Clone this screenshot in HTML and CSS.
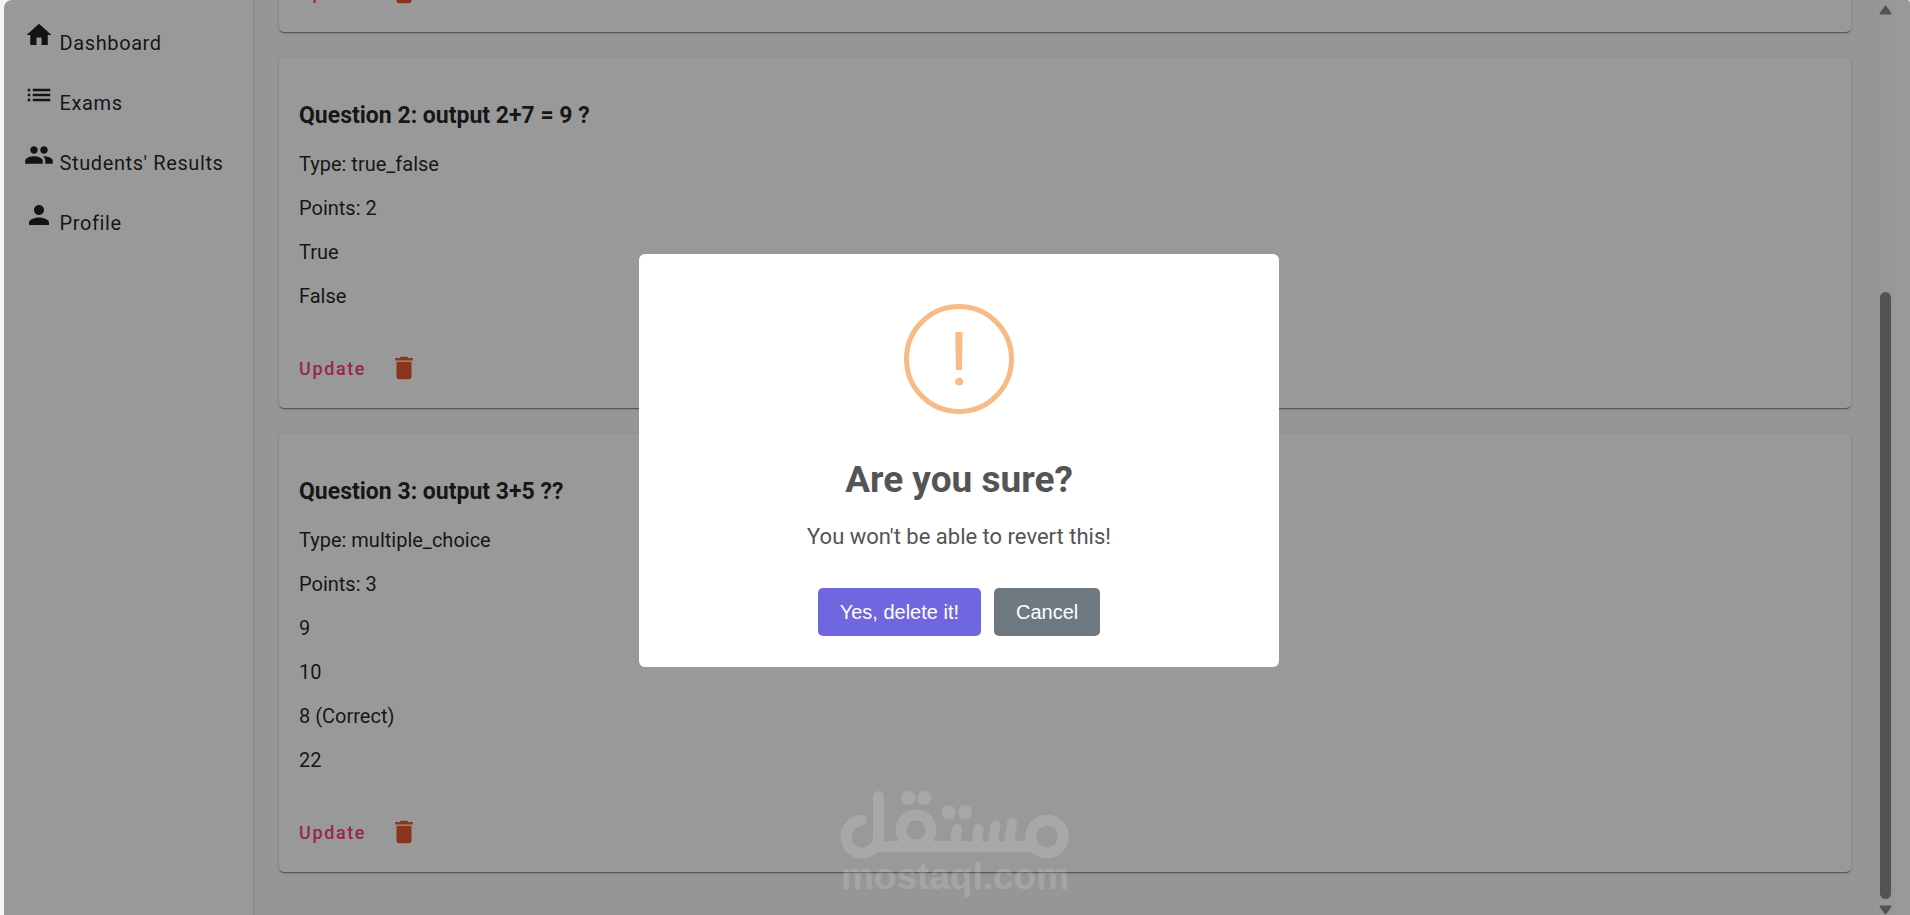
FILE: index.html
```html
<!DOCTYPE html>
<html lang="en">
<head>
  <meta charset="UTF-8">
  <title>Exam Questions</title>
  <link rel="stylesheet" href="styles.css">
</head>
<body>

  <div class="app">
    <nav class="sidebar">
      <a class="nav-link" href="#dashboard">
        <svg class="icon" viewBox="0 0 24 24"><path d="M10 20v-6h4v6h5v-8h3L12 3 2 12h3v8z"/></svg>
        Dashboard
      </a>
      <a class="nav-link" href="#exams">
        <svg class="icon" viewBox="0 0 24 24"><path d="M3 13h2v-2H3v2zm0 4h2v-2H3v2zm0-8h2V7H3v2zm4 4h14v-2H7v2zm0 4h14v-2H7v2zM7 7v2h14V7H7z"/></svg>
        Exams
      </a>
      <a class="nav-link" href="#results">
        <svg class="icon" viewBox="0 0 24 24"><path d="M16 11c1.660 0 2.990-1.340 2.990-3S17.660 5 16 5c-1.660 0-3 1.340-3 3s1.340 3 3 3zm-8 0c1.660 0 2.990-1.340 2.990-3S9.660 5 8 5C6.340 5 5 6.340 5 8s1.340 3 3 3zm0 2c-2.330 0-7 1.170-7 3.500V19h14v-2.500c0-2.330-4.670-3.500-7-3.500zm8 0c-.29 0-.62.02-.97.05 1.160.84 1.970 1.970 1.970 3.450V19h6v-2.500c0-2.330-4.670-3.500-7-3.500z"/></svg>
        Students' Results
      </a>
      <a class="nav-link" href="#profile">
        <svg class="icon" viewBox="0 0 24 24"><path d="M12 12c2.21 0 4-1.79 4-4s-1.79-4-4-4-4 1.79-4 4 1.79 4 4 4zm0 2c-2.67 0-8 1.34-8 4v2h16v-2c0-2.66-5.33-4-8-4z"/></svg>
        Profile
      </a>
    </nav>

    <main class="content">
      <section class="card">
        <div class="actions">
          <button class="update-btn">Update</button>
          <button class="delete-btn" aria-label="Delete question 1">
            <svg class="icon" viewBox="0 0 24 24"><path d="M6 19c0 1.1.9 2 2 2h8c1.1 0 2-.9 2-2V7H6v12zM19 4h-3.5l-1-1h-5l-1 1H5v2h14V4z"/></svg>
          </button>
        </div>
      </section>

      <section class="card">
        <h3>Question 2: output 2+7 = 9 ?</h3>
        <p>Type: true_false</p>
        <p>Points: 2</p>
        <p>True</p>
        <p>False</p>
        <div class="actions">
          <button class="update-btn">Update</button>
          <button class="delete-btn" aria-label="Delete question 2">
            <svg class="icon" viewBox="0 0 24 24"><path d="M6 19c0 1.1.9 2 2 2h8c1.1 0 2-.9 2-2V7H6v12zM19 4h-3.5l-1-1h-5l-1 1H5v2h14V4z"/></svg>
          </button>
        </div>
      </section>

      <section class="card">
        <h3>Question 3: output 3+5 ??</h3>
        <p>Type: multiple_choice</p>
        <p>Points: 3</p>
        <p>9</p>
        <p>10</p>
        <p>8 (Correct)</p>
        <p>22</p>
        <div class="actions">
          <button class="update-btn">Update</button>
          <button class="delete-btn" aria-label="Delete question 3">
            <svg class="icon" viewBox="0 0 24 24"><path d="M6 19c0 1.1.9 2 2 2h8c1.1 0 2-.9 2-2V7H6v12zM19 4h-3.5l-1-1h-5l-1 1H5v2h14V4z"/></svg>
          </button>
        </div>
      </section>
    </main>

    <div class="scrollbar">
      <svg class="arrow" viewBox="0 0 13 10"><path d="M6.500 1.500L11.500 8.500H1.500z"/></svg>
      <div class="track"><div class="thumb"></div></div>
      <svg class="arrow" viewBox="0 0 13 10"><path d="M6.500 8.500L1.500 1.500h10z"/></svg>
    </div>

    <div class="backdrop">
      <div class="modal" role="dialog" aria-labelledby="modalTitle">
        <div class="modal-icon">!</div>
        <h2 id="modalTitle">Are you sure?</h2>
        <div class="modal-text">You won't be able to revert this!</div>
        <div class="modal-actions">
          <button class="btn confirm">Yes, delete it!</button>
          <button class="btn cancel">Cancel</button>
        </div>
      </div>
    </div>
  </div>

  <div class="watermark">
    <svg viewBox="20 20 230 70" role="img" aria-label="مستقل">
      <g fill="none" stroke="#fff" stroke-width="11" stroke-linecap="round">
        <path d="M41.500 50.500A16.300 16.300 0 1 0 58.500 66V26.500"/>
        <path d="M56 76.500H214"/>
        <circle cx="96" cy="60" r="15"/>
        <circle cx="227" cy="66.500" r="16.300"/>
        <path d="M137 59l-2 14M158.500 59l-2 14M175.500 55.500l-2.500 17M192 53l-3 20" stroke-width="10"/>
      </g>
      <g fill="#fff">
        <circle cx="88.300" cy="28" r="7"/>
        <circle cx="104.500" cy="28" r="7"/>
        <circle cx="128.700" cy="42.300" r="7"/>
        <circle cx="145" cy="42.300" r="7"/>
      </g>
    </svg>
    <span>mostaql.com</span>
  </div>

</body>
</html>
```
FILE: styles.css
```css
* {
  box-sizing: border-box;
}
body {
  margin: 0;
  background: #f5f5f5;
  font-family: Roboto, Arial, sans-serif;
  font-size: 20px;
  line-height: 24px;
  color: rgba(0, 0, 0, 0.87);
}
button {
  border: none;
  background: none;
  padding: 0;
  cursor: pointer;
}
.app {
  position: relative;
  display: flex;
  height: 100vh;
  margin-left: 4px;
  background: #fff;
  border-radius: 8px 3px 0 0;
  overflow: hidden;
}
.icon {
  width: 30px;
  height: 30px;
  fill: currentColor;
}

/* sidebar */
.sidebar {
  flex: 0 0 250px;
  padding: 20px;
  border-right: 1px solid #dfdfdf;
}
.nav-link {
  display: block;
  height: 60px;
  line-height: 42px;
  letter-spacing: 0.03em;
  color: inherit;
  text-decoration: none;
  white-space: nowrap;
}

/* questions */
.content {
  flex: 1;
  display: flex;
  flex-direction: column;
  justify-content: flex-end;
  gap: 26px;
  padding: 0 25px 43px;
  background: #fafafa;
  overflow: hidden;
}
.card {
  flex-shrink: 0;
  padding: 44px 20px 25px;
  background: #fff;
  border-radius: 5px;
  box-shadow: 0 2px 1px -1px rgba(0, 0, 0, 0.3), 0 1px 1px rgba(0, 0, 0, 0.16), 0 1px 4px rgba(0, 0, 0, 0.12);
}
.card h3 {
  margin: 0 0 22px;
  font-size: 23px;
  line-height: 28px;
}
.card p {
  margin: 0 0 20px;
}
.actions {
  display: flex;
  align-items: center;
  gap: 23px;
  margin-top: 45px;
}
.update-btn {
  font-family: inherit;
  font-size: 18px;
  font-weight: 500;
  letter-spacing: 0.09em;
  color: #ff4081;
}
.delete-btn {
  height: 30px;
  color: #e65a35;
}

/* scrollbar */
.scrollbar {
  flex: 0 0 34px;
  display: flex;
  flex-direction: column;
  padding-top: 5px;
  padding-left: 3px;
  background: linear-gradient(to right, #fcfcfc 19px, #fff 19px);
}
.arrow {
  flex-shrink: 0;
  width: 13px;
  height: 10px;
  fill: #8b8b8b;
  stroke: #8b8b8b;
  stroke-width: 2;
  stroke-linejoin: round;
}
.track {
  flex: 1;
  display: flex;
  align-items: flex-end;
  width: 13px;
  padding: 4px 1px 6px;
}
.thumb {
  width: 11px;
  height: 69%;
  border-radius: 6px;
  background: #8b8b8b;
}

/* confirm dialog */
.backdrop {
  position: absolute;
  inset: 0;
  display: flex;
  align-items: center;
  justify-content: center;
  padding: 6px 0 0 4px;
  background: rgba(0, 0, 0, 0.4);
}
.modal {
  display: flex;
  flex-direction: column;
  align-items: center;
  width: 640px;
  max-width: 100%;
  padding: 50px 0 31px;
  background: #fff;
  border-radius: 6px;
  color: #545454;
}
.modal-icon {
  width: 110px;
  height: 110px;
  border: 5px solid #f8bb86;
  border-radius: 50%;
  color: #f8bb86;
  font-size: 75px;
  line-height: 100px;
  text-align: center;
}
.modal h2 {
  margin: 44px 0 0;
  font-size: 37px;
  line-height: 44px;
}
.modal-text {
  margin-top: 21px;
  font-size: 22px;
  line-height: 28px;
}
.modal-actions {
  display: flex;
  gap: 13px;
  margin-top: 37px;
}
.btn {
  height: 48px;
  padding: 0 22px;
  border-radius: 5px;
  font-family: "Liberation Sans", Arial, sans-serif;
  font-size: 20px;
  color: #fff;
}
.confirm {
  background: #7066e0;
}
.cancel {
  background: #6e7881;
}

/* site watermark, sits over everything */
.watermark {
  position: absolute;
  bottom: 21px;
  left: 50%;
  width: 230px;
  margin-left: -115px;
  opacity: 0.15;
  pointer-events: none;
}
.watermark svg {
  display: block;
  width: 230px;
  height: 70px;
}
.watermark span {
  display: block;
  font: bold 37px/34px "Liberation Sans", Arial, sans-serif;
  color: #fff;
  text-align: center;
}
```
